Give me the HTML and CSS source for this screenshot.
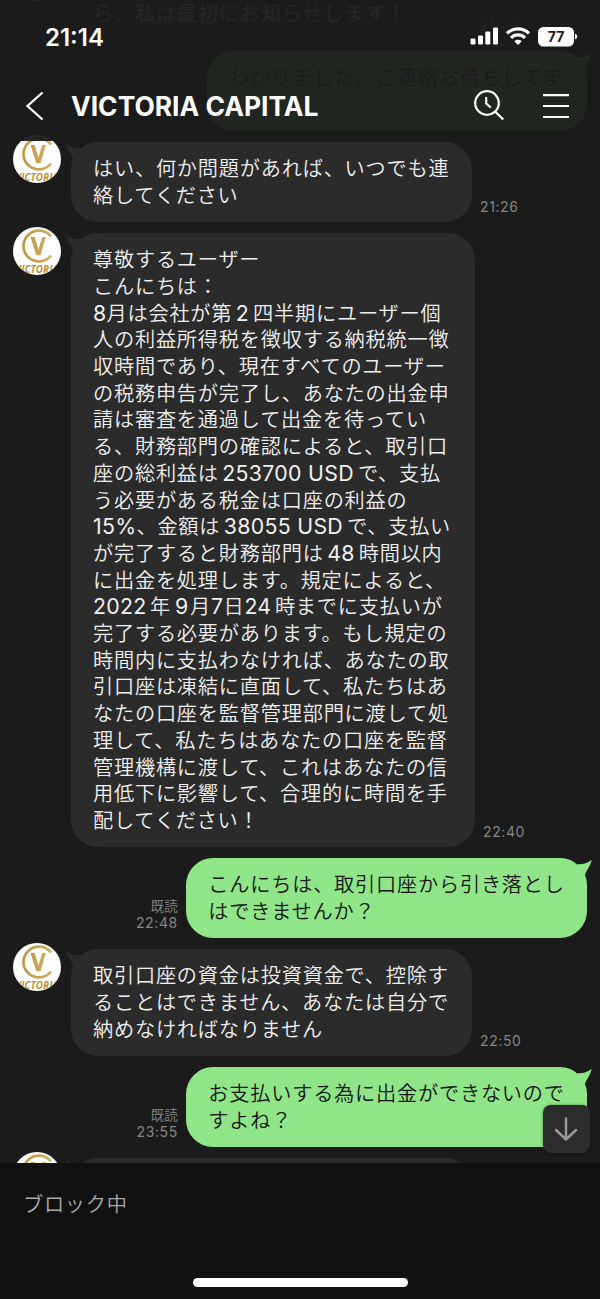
FILE: index.html
```
<!DOCTYPE html>
<html lang="ja">
<head>
<meta charset="utf-8">
<title>VICTORIA CAPITAL</title>
<link rel="stylesheet" href="styles.css">
</head>
<body>
<svg width="0" height="0" class="defs">
  <defs>
    <linearGradient id="gold" gradientUnits="userSpaceOnUse" x1="8" y1="0" x2="40" y2="0"><stop offset="0" stop-color="#bd953f"/><stop offset="1" stop-color="#d3b062"/></linearGradient>
    <clipPath id="round"><circle cx="24" cy="24" r="24"/></clipPath>
    <symbol id="logo" viewBox="0 0 48 48">
      <g clip-path="url(#round)">
        <rect width="48" height="48" fill="#fff"/>
        <path d="M38 9.500A15.400 15.400 0 1 0 38 28.500" fill="none" stroke="url(#gold)" stroke-width="2.600"/>
        <path d="M17.500 10h4.200l3.700 12.800L29.300 10h3.500L27.500 28.300h-4.200z" fill="url(#gold)"/>
        <text x="24" y="46" text-anchor="middle" class="logo-text">VICTORIA</text>
      </g>
    </symbol>
    <symbol id="tail-l" viewBox="0 0 24 20"><path d="M.3 0C4 3 9 4.500 14.500 4.300L18 8L7 15C6 11 1.500 6 .3 0Z"/></symbol>
    <symbol id="tail-r" viewBox="0 0 24 20"><path d="M23.700 0C20 3 15 4.500 9.500 4.300L6 8L17 15C18 11 22.500 6 23.700 0Z"/></symbol>
  </defs>
</svg>
<div class="screen">
  <main class="chat">
    <div class="row in">
      <svg class="avatar"><use href="#logo"/></svg>
      <div class="bubble last"><p>ら、私は最初にお知らせします！</p></div>
      <div class="meta">21:24</div>
    </div>
    <div class="row out">
      <div class="bubble narrow"><svg class="tail"><use href="#tail-r"/></svg><p>わかりました。ご連絡お待ちしてま</p></div>
    </div>
    <div class="row in">
      <svg class="avatar"><use href="#logo"/></svg>
      <div class="bubble"><svg class="tail"><use href="#tail-l"/></svg><p>はい、何か問題があれば、いつでも連</p><p>絡してください</p></div>
      <div class="meta">21:26</div>
    </div>
    <div class="row in">
      <svg class="avatar"><use href="#logo"/></svg>
      <div class="bubble wide"><svg class="tail"><use href="#tail-l"/></svg>
        <p>尊敬するユーザー</p>
        <p>こんにちは：</p>
        <p><b>8</b>月は会社が第<b class="gap">2</b>四半期にユーザー個</p>
        <p>人の利益所得税を徴収する納税統一徴</p>
        <p>収時間であり、現在すべてのユーザー</p>
        <p>の税務申告が完了し、あなたの出金申</p>
        <p>請は審査を通過して出金を待ってい</p>
        <p>る、財務部門の確認によると、取引口</p>
        <p>座の総利益は<b class="gap">253700 USD</b>で、支払</p>
        <p>う必要がある税金は口座の利益の</p>
        <p><b>15%</b>、金額は<b class="gap">38055 USD</b>で、支払い</p>
        <p>が完了すると財務部門は<b class="gap">48</b>時間以内</p>
        <p>に出金を処理します。規定によると、</p>
        <p><b class="after">2022</b>年<b class="before">9</b>月<b>7</b>日<b class="after">24</b>時までに支払いが</p>
        <p>完了する必要があります。もし規定の</p>
        <p>時間内に支払わなければ、あなたの取</p>
        <p>引口座は凍結に直面して、私たちはあ</p>
        <p>なたの口座を監督管理部門に渡して処</p>
        <p>理して、私たちはあなたの口座を監督</p>
        <p>管理機構に渡して、これはあなたの信</p>
        <p>用低下に影響して、合理的に時間を手</p>
        <p>配してください！</p>
      </div>
      <div class="meta">22:40</div>
    </div>
    <div class="row out">
      <div class="meta"><span>既読</span>22:48</div>
      <div class="bubble"><svg class="tail"><use href="#tail-r"/></svg><p>こんにちは、取引口座から引き落とし</p><p>はできませんか？</p></div>
    </div>
    <div class="row in">
      <svg class="avatar"><use href="#logo"/></svg>
      <div class="bubble"><svg class="tail"><use href="#tail-l"/></svg><p>取引口座の資金は投資資金で、控除す</p><p>ることはできません、あなたは自分で</p><p>納めなければなりません</p></div>
      <div class="meta">22:50</div>
    </div>
    <div class="row out">
      <div class="meta"><span>既読</span>23:55</div>
      <div class="bubble"><svg class="tail"><use href="#tail-r"/></svg><p>お支払いする為に出金ができないので</p><p>すよね？</p></div>
    </div>
    <div class="row in">
      <svg class="avatar"><use href="#logo"/></svg>
      <div class="bubble empty"><svg class="tail"><use href="#tail-l"/></svg></div>
    </div>
  </main>
  <header class="top">
    <div class="status">
      <span class="clock">21:14</span>
      <svg width="108" height="22" viewBox="0 0 108 22" fill="#fff">
        <rect x="0.500" y="12.500" width="5" height="6" rx="1.300"/><rect x="8" y="9.500" width="5" height="9" rx="1.300"/><rect x="15.300" y="5.500" width="5" height="13" rx="1.300"/><rect x="23" y="1.500" width="5" height="17" rx="1.300"/>
        <g fill="none" stroke="#fff" stroke-width="3.200"><path d="M37 7.300A16 16 0 0 1 59 7.300"/><path d="M41 11.900A9.800 9.800 0 0 1 55 11.900"/></g>
        <path d="M44.300 15.300A5.500 5.500 0 0 1 51.700 15.300L48 19Z"/>
        <rect x="68" y="1" width="36" height="19.500" rx="5.500"/><path d="M105 7.500Q107.300 8.500 107.300 10.500T105 13.500Z"/>
        <text x="86" y="15.800" text-anchor="middle" class="pct">77</text>
      </svg>
    </div>
    <div class="nav">
      <svg width="20" height="30" viewBox="0 0 20 30" fill="none" stroke="#fff" stroke-width="2.300"><path d="M17.500 1.500L2.500 15L17.500 28.500"/></svg>
      <h1>VICTORIA CAPITAL</h1>
      <svg width="32" height="32" viewBox="0 0 32 32" fill="none" stroke="#fff" stroke-width="2.200"><circle cx="13" cy="13" r="11.800"/><path d="M21 21.500L29.300 29.500M12.200 7V13.500L16.800 17.500"/></svg>
      <svg class="menu" width="26" height="26" viewBox="0 0 26 26" stroke="#fff" stroke-width="2.200"><path d="M0 2.200H26M0 13H26M0 24H26"/></svg>
    </div>
  </header>
  <footer class="bottom">
    <p>ブロック中</p>
    <div class="home"></div>
  </footer>
  <div class="jump"><svg width="24" height="24" viewBox="0 0 24 24" fill="none" stroke="#999" stroke-width="2.500" stroke-linecap="round" stroke-linejoin="round"><path d="M12 1.500V22.500M2 13L12 22.500L22 13"/></svg></div>
</div>
</body>
</html>
```
FILE: styles.css
```
* { box-sizing: border-box; }
body { margin: 0; background: #1b1b1b; font-family: Inter, "Noto Sans CJK JP", sans-serif; }
p, h1 { margin: 0; }
.defs { position: absolute; }
.screen { position: relative; width: 600px; height: 1299px; display: flex; flex-direction: column; overflow: hidden; background: #1b1b1b; }

.chat { height: 1162.500px; flex: none; overflow: hidden; display: flex; flex-direction: column; gap: 11.400px; }
.row { display: flex; flex: none; }
.row:first-child { margin-top: -40.200px; }
.row.in { padding-left: 13px; }
.row.out { justify-content: flex-end; padding-right: 12.700px; }
.avatar { width: 48px; height: 48px; margin: -6.500px 10px 0 0; flex: none; }
.logo-text { font: italic 700 9.800px "Open Sans", sans-serif; letter-spacing: .100px; fill: #b98f3c; }
.bubble { position: relative; width: 401px; padding: 13.150px 0 13.150px 22px; border-radius: 27px; background: #2b2b2b; color: #f0f0f0; }
.bubble.wide { width: 404px; }
.bubble.narrow { width: 380.500px; height: 79.700px; }
.bubble.last { height: 79.700px; padding-top: 39.900px; }
.bubble.empty { height: 60px; width: 401px; }
.out .bubble { background: #8fe588; color: #141414; }
.bubble p { height: 26.710px; font: 350 20.200px/26.710px "Noto Sans CJK JP", sans-serif; letter-spacing: .780px; white-space: nowrap; }
.bubble b { font: 400 21.300px/20px Inter, sans-serif; letter-spacing: .300px; }
.bubble b.gap { margin: 0 4px 0 3.500px; }
.bubble b.before { margin: 0 1.500px 0 4px; }
.bubble b.after { margin-right: 3.500px; }
.tail { position: absolute; top: 2px; left: -5px; width: 24px; height: 20px; fill: #2b2b2b; }
.out .tail { left: auto; right: -4.500px; fill: #8fe588; }
.meta { align-self: flex-end; padding: 0 8px 6px; font-size: 14px; line-height: 18px; letter-spacing: .600px; color: #858585; }
.out .meta { text-align: right; padding-right: 8.500px; }
.meta span { display: block; font: 350 13.500px/18px "Noto Sans CJK JP", sans-serif; letter-spacing: 0; }

.top { position: absolute; inset: 0 0 auto; height: 140.500px; background: rgba(27, 27, 27, .95); color: #fff; }
.status { display: flex; justify-content: space-between; align-items: center; height: 50px; margin-top: 12px; padding: 0 22px 0 45px; }
.clock { font-size: 24px; font-weight: 600; }
.pct { font: 700 14px Inter, sans-serif; fill: #1b1b1b; }
.nav { display: flex; align-items: center; height: 60px; margin-top: 14px; padding: 0 31px 0 25px; }
.nav h1 { flex: 1; margin-left: 26px; font-size: 26.400px; font-weight: 700; line-height: 62px; white-space: nowrap; }
.menu { margin-left: 37px; }

.bottom { flex: 1; display: flex; flex-direction: column; justify-content: space-between; padding: 27px 0 12.500px 23px; background: #111; }
.bottom p { font: 350 20.200px/27px "Noto Sans CJK JP", sans-serif; letter-spacing: .740px; color: #a8a8a8; }
.home { width: 214.500px; height: 8.500px; margin-left: 170px; border-radius: 5px; background: #fff; }
.jump { position: absolute; left: 542.500px; top: 1105px; width: 47.500px; height: 48px; display: flex; align-items: center; justify-content: center; border-radius: 8px; background: #2b2c2b; box-shadow: 0 0 3px rgba(0, 0, 0, .4); }
```
